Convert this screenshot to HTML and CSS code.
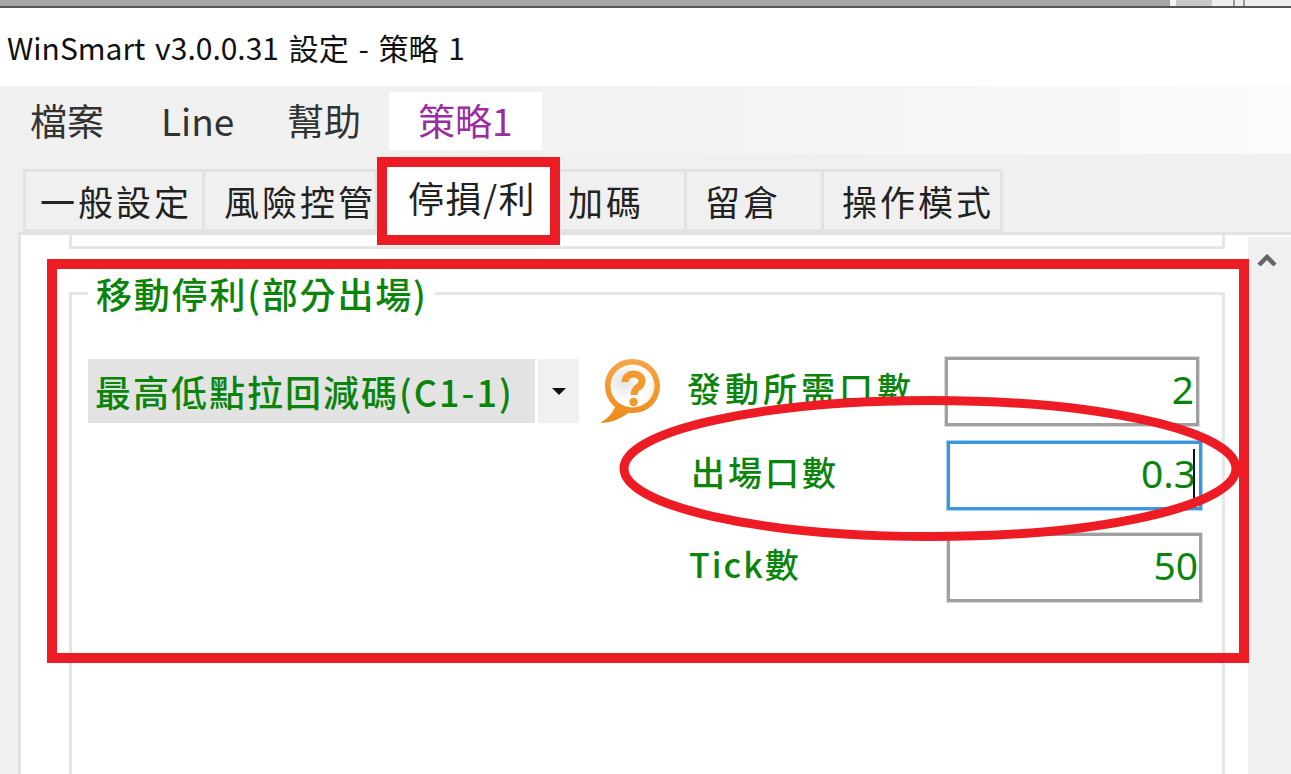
FILE: index.html
```html
<!DOCTYPE html>
<html lang="zh-Hant">
<head>
    <meta charset="UTF-8">
    <title>WinSmart v3.0.0.31 設定 - 策略 1</title>
    <link rel="stylesheet" href="styles.css">
</head>
<body>
    <div class="screen-edge"><span class="edge-tail"></span></div>
    <div class="title-bar">WinSmart v3.0.0.31 設定 - 策略 1</div>

    <div class="menu-bar">
        <div class="menu-item item-file">檔案</div>
        <div class="menu-item item-line">Line</div>
        <div class="menu-item item-help">幫助</div>
        <div class="menu-item item-strategy">策略1</div>
    </div>

    <div class="tab-strip">
        <div class="tab tab-general">一般設定</div>
        <div class="tab tab-risk">風險控管</div>
        <div class="tab tab-active">停損/利</div>
        <div class="tab tab-add">加碼</div>
        <div class="tab tab-hold">留倉</div>
        <div class="tab tab-mode">操作模式</div>
    </div>

    <div class="panel">
        <div class="panel-body">
            <div class="prev-group"></div>
            <div class="group">
                <div class="group-title">移動停利(部分出場)</div>
                <div class="group-content">
                    <div class="combo">
                        <div class="combo-value">最高低點拉回減碼(C1-1)</div>
                        <div class="combo-button"><span class="combo-arrow"></span></div>
                    </div>
                    <svg class="help-icon" viewBox="0 0 60 64" width="60" height="64">
                        <defs>
                            <linearGradient id="helpRing" x1="0" y1="0" x2="0" y2="1">
                                <stop offset="0" stop-color="#f5a64a"/>
                                <stop offset="1" stop-color="#ee8a18"/>
                            </linearGradient>
                            <radialGradient id="helpFace" cx="0.3" cy="0.4" r="0.8">
                                <stop offset="0" stop-color="#e4e4e4"/>
                                <stop offset="0.6" stop-color="#ffffff"/>
                                <stop offset="1" stop-color="#fff4e6"/>
                            </radialGradient>
                        </defs>
                        <path d="M32 0C17 0 5 12 5 27c0 9 4 16 10 21-3 7-8 12-15 16 10 0 21-4 28-10h5c15 0 27-12 27-27S48 0 32 0z" fill="url(#helpRing)"/>
                        <ellipse cx="32.5" cy="27" rx="22" ry="21.5" fill="url(#helpFace)"/>
                        <path d="M25 23c0-5 4-8 8.500-8 5 0 8.500 3 8.500 7 0 4-3 6-5 7-2 2-3 3-3 7" fill="none" stroke="#f29a2e" stroke-width="7"/>
                        <circle cx="33.500" cy="43" r="4.200" fill="#f29a2e"/>
                    </svg>
                    <div class="fields">
                        <div class="field field-start">
                            <div class="field-label">發動所需口數</div>
                            <div class="field-input">2</div>
                        </div>
                        <div class="field field-exit">
                            <div class="field-label">出場口數</div>
                            <div class="field-input is-focused">0.3<span class="caret"></span></div>
                        </div>
                        <div class="field field-tick">
                            <div class="field-label">Tick數</div>
                            <div class="field-input">50</div>
                        </div>
                    </div>
                </div>
            </div>
        </div>
        <div class="scrollbar">
            <svg class="scroll-up" viewBox="0 0 20 12" width="20" height="12">
                <path d="M2 11l8-8 8 8" fill="none" stroke="#666" stroke-width="4.500"/>
            </svg>
        </div>
    </div>

    <!-- 紅色標註 -->
    <div class="mark mark-tab"></div>
    <div class="mark mark-group"></div>
    <svg class="mark-ellipse" viewBox="0 0 1291 774" width="1291" height="774">
        <ellipse cx="930" cy="468.500" rx="306" ry="68" fill="none" stroke="#ed1c24" stroke-width="9"/>
    </svg>
</body>
</html>
```

FILE: styles.css
```css
html, body {
    margin: 0;
    height: 774px;
    overflow: hidden;
}
body {
    position: relative;
    display: flex;
    flex-direction: column;
    background-color: #f0f0f0;
    font-family: "Noto Sans CJK TC", "Noto Sans", sans-serif;
    color: #222;
}
.screen-edge {
    height: 6px;
    flex-shrink: 0;
    background-color: #a6a6a6;
    border-bottom: 2px solid #555;
    display: flex;
    justify-content: flex-end;
}
.edge-tail {
    width: 121px;
    background: linear-gradient(to right,
        #f4f4f4 0, #f4f4f4 6px,
        #c8c8c8 6px, #c8c8c8 42px,
        #eeeeee 42px, #eeeeee 63px,
        #999999 63px, #999999 65px,
        #eeeeee 65px, #eeeeee 73px,
        #999999 73px, #999999 75px,
        #eeeeee 75px);
}
.title-bar {
    height: 78px;
    flex-shrink: 0;
    background-color: #fff;
    box-sizing: border-box;
    padding: 19px 0 0 7px;
    font-size: 30px;
    line-height: 40px;
    word-spacing: 3px;
    color: #111;
}
.menu-bar {
    height: 68px;
    flex-shrink: 0;
    display: flex;
    background: linear-gradient(to right, #f0f0f0, #f2f2f2 50%, #fbfbfb);
    font-size: 37px;
    line-height: 56px;
}
.menu-item {
    height: 58px;
    margin-top: 6px;
    color: #333;
}
.item-file {
    margin-left: 30px;
    width: 131px;
}
.item-line {
    width: 126px;
}
.item-help {
    width: 102px;
}
.item-strategy {
    width: 124px;
    padding-left: 29px;
    background-color: #fff;
    color: #9b2d9f;
}
.tab-strip {
    height: 78px;
    flex-shrink: 0;
    box-sizing: border-box;
    padding: 15px 0 0 23px;
    display: flex;
    background-color: #f0f0f0;
}
.tab {
    height: 63px;
    box-sizing: border-box;
    border: 3px solid #e2e2e2;
    border-left-width: 0;
    font-size: 35px;
    line-height: 58px;
    letter-spacing: 3px;
    white-space: nowrap;
    color: #222;
}
.tab-general {
    width: 182px;
    border-left-width: 3px;
    padding-left: 14px;
}
.tab-risk {
    width: 173px;
    padding-left: 19px;
}
.tab-active {
    position: relative;
    z-index: 1;
    width: 180px;
    height: 68px;
    margin-top: -2px;
    padding-left: 30px;
    background-color: #fff;
    border: none;
    font-size: 36px;
    letter-spacing: 1.500px;
    line-height: 60px;
}
.tab-add {
    width: 129px;
    padding-left: 10px;
}
.tab-hold {
    width: 137px;
    padding-left: 18px;
}
.tab-mode {
    width: 179px;
    padding-left: 18px;
}
.panel {
    flex: 1;
    display: flex;
    min-height: 0;
    margin-left: 18px;
    background-color: #fff;
    border-top: 3px solid #e2e2e2;
}
.panel-body {
    width: 1230px;
    display: flex;
    flex-direction: column;
    box-sizing: border-box;
    border-left: 3px solid #e2e2e2;
    padding-left: 48px;
}
.prev-group {
    width: 1156px;
    height: 14px;
    flex-shrink: 0;
    box-sizing: border-box;
    border: 3px solid #e6e6e6;
    border-top: none;
}
.group {
    width: 1156px;
    flex: 1;
    margin-top: 43px;
    box-sizing: border-box;
    border: 3px solid #e6e6e6;
    border-bottom: none;
}
.group-title {
    width: fit-content;
    margin: -27px 0 0 16px;
    padding: 0 7px 0 8px;
    background-color: #fff;
    font-size: 36px;
    font-weight: 500;
    line-height: 50px;
    letter-spacing: 1.800px;
    color: #0b840b;
}
.group-content {
    display: flex;
    align-items: flex-start;
    margin-top: 41px;
    margin-left: 16px;
    color: #0b840b;
}
.combo {
    display: flex;
    height: 64px;
    width: 491px;
    flex-shrink: 0;
}
.combo-value {
    width: 447px;
    box-sizing: border-box;
    padding-left: 7px;
    background-color: #e3e3e3;
    font-size: 36px;
    font-weight: 500;
    line-height: 64px;
    white-space: nowrap;
    letter-spacing: 2px;
}
.combo-button {
    width: 41px;
    margin-left: 3px;
    background-color: #f0f0f0;
    display: flex;
    align-items: center;
    justify-content: center;
}
.combo-arrow {
    width: 0;
    height: 0;
    border-left: 7px solid transparent;
    border-right: 7px solid transparent;
    border-top: 7px solid #111;
}
.help-icon {
    margin-left: 21px;
    flex-shrink: 0;
}
.fields {
    margin-top: -2px;
    flex: 1;
}
.field {
    position: relative;
    height: 69px;
    margin-bottom: 15px;
}
.field-exit {
    margin-bottom: 23px;
}
.field-label {
    position: absolute;
    top: 6px;
    font-size: 34px;
    font-weight: 500;
    line-height: 50px;
    white-space: nowrap;
}
.field-start .field-label {
    left: 27px;
    letter-spacing: 4px;
}
.field-exit .field-label {
    left: 31px;
    letter-spacing: 3px;
}
.field-tick .field-label {
    left: 29px;
    letter-spacing: 2px;
}
.field-input {
    position: absolute;
    left: 285px;
    top: 0;
    width: 254px;
    height: 69px;
    box-sizing: border-box;
    border: 3px solid #a0a0a0;
    box-shadow: 0 0 0 1px #dcdcdc;
    padding-right: 2px;
    text-align: right;
    font-family: "Noto Sans", sans-serif;
    font-size: 39px;
    line-height: 58px;
    background-color: #fff;
}
.field-exit .field-input, .field-tick .field-input {
    left: 287px;
    width: 255px;
}
.field-tick .field-input {
    padding-right: 1px;
}
.field-input.is-focused {
    border-color: #3a96dd;
    box-shadow: 0 0 0 1px #a8d0f0;
    padding-right: 3px;
}
.caret {
    position: absolute;
    right: 4px;
    top: 5px;
    width: 2px;
    height: 49px;
    background-color: #111;
}
.scrollbar {
    flex: 1;
    margin-top: 2px;
    background-color: #f0f0f0;
    display: flex;
    justify-content: center;
    padding-top: 17px;
    align-items: flex-start;
}
.scroll-up {
    margin-left: -5px;
}

/* 紅色標註，蓋在畫面上 */
.mark {
    position: absolute;
    z-index: 2;
    box-sizing: border-box;
    border: 10px solid #ed1c24;
}
.mark-tab {
    left: 377px;
    top: 157px;
    width: 183px;
    height: 88px;
}
.mark-group {
    left: 47px;
    top: 259px;
    width: 1202px;
    height: 404px;
}
.mark-ellipse {
    position: absolute;
    z-index: 2;
    left: 0;
    top: 0;
}
```
